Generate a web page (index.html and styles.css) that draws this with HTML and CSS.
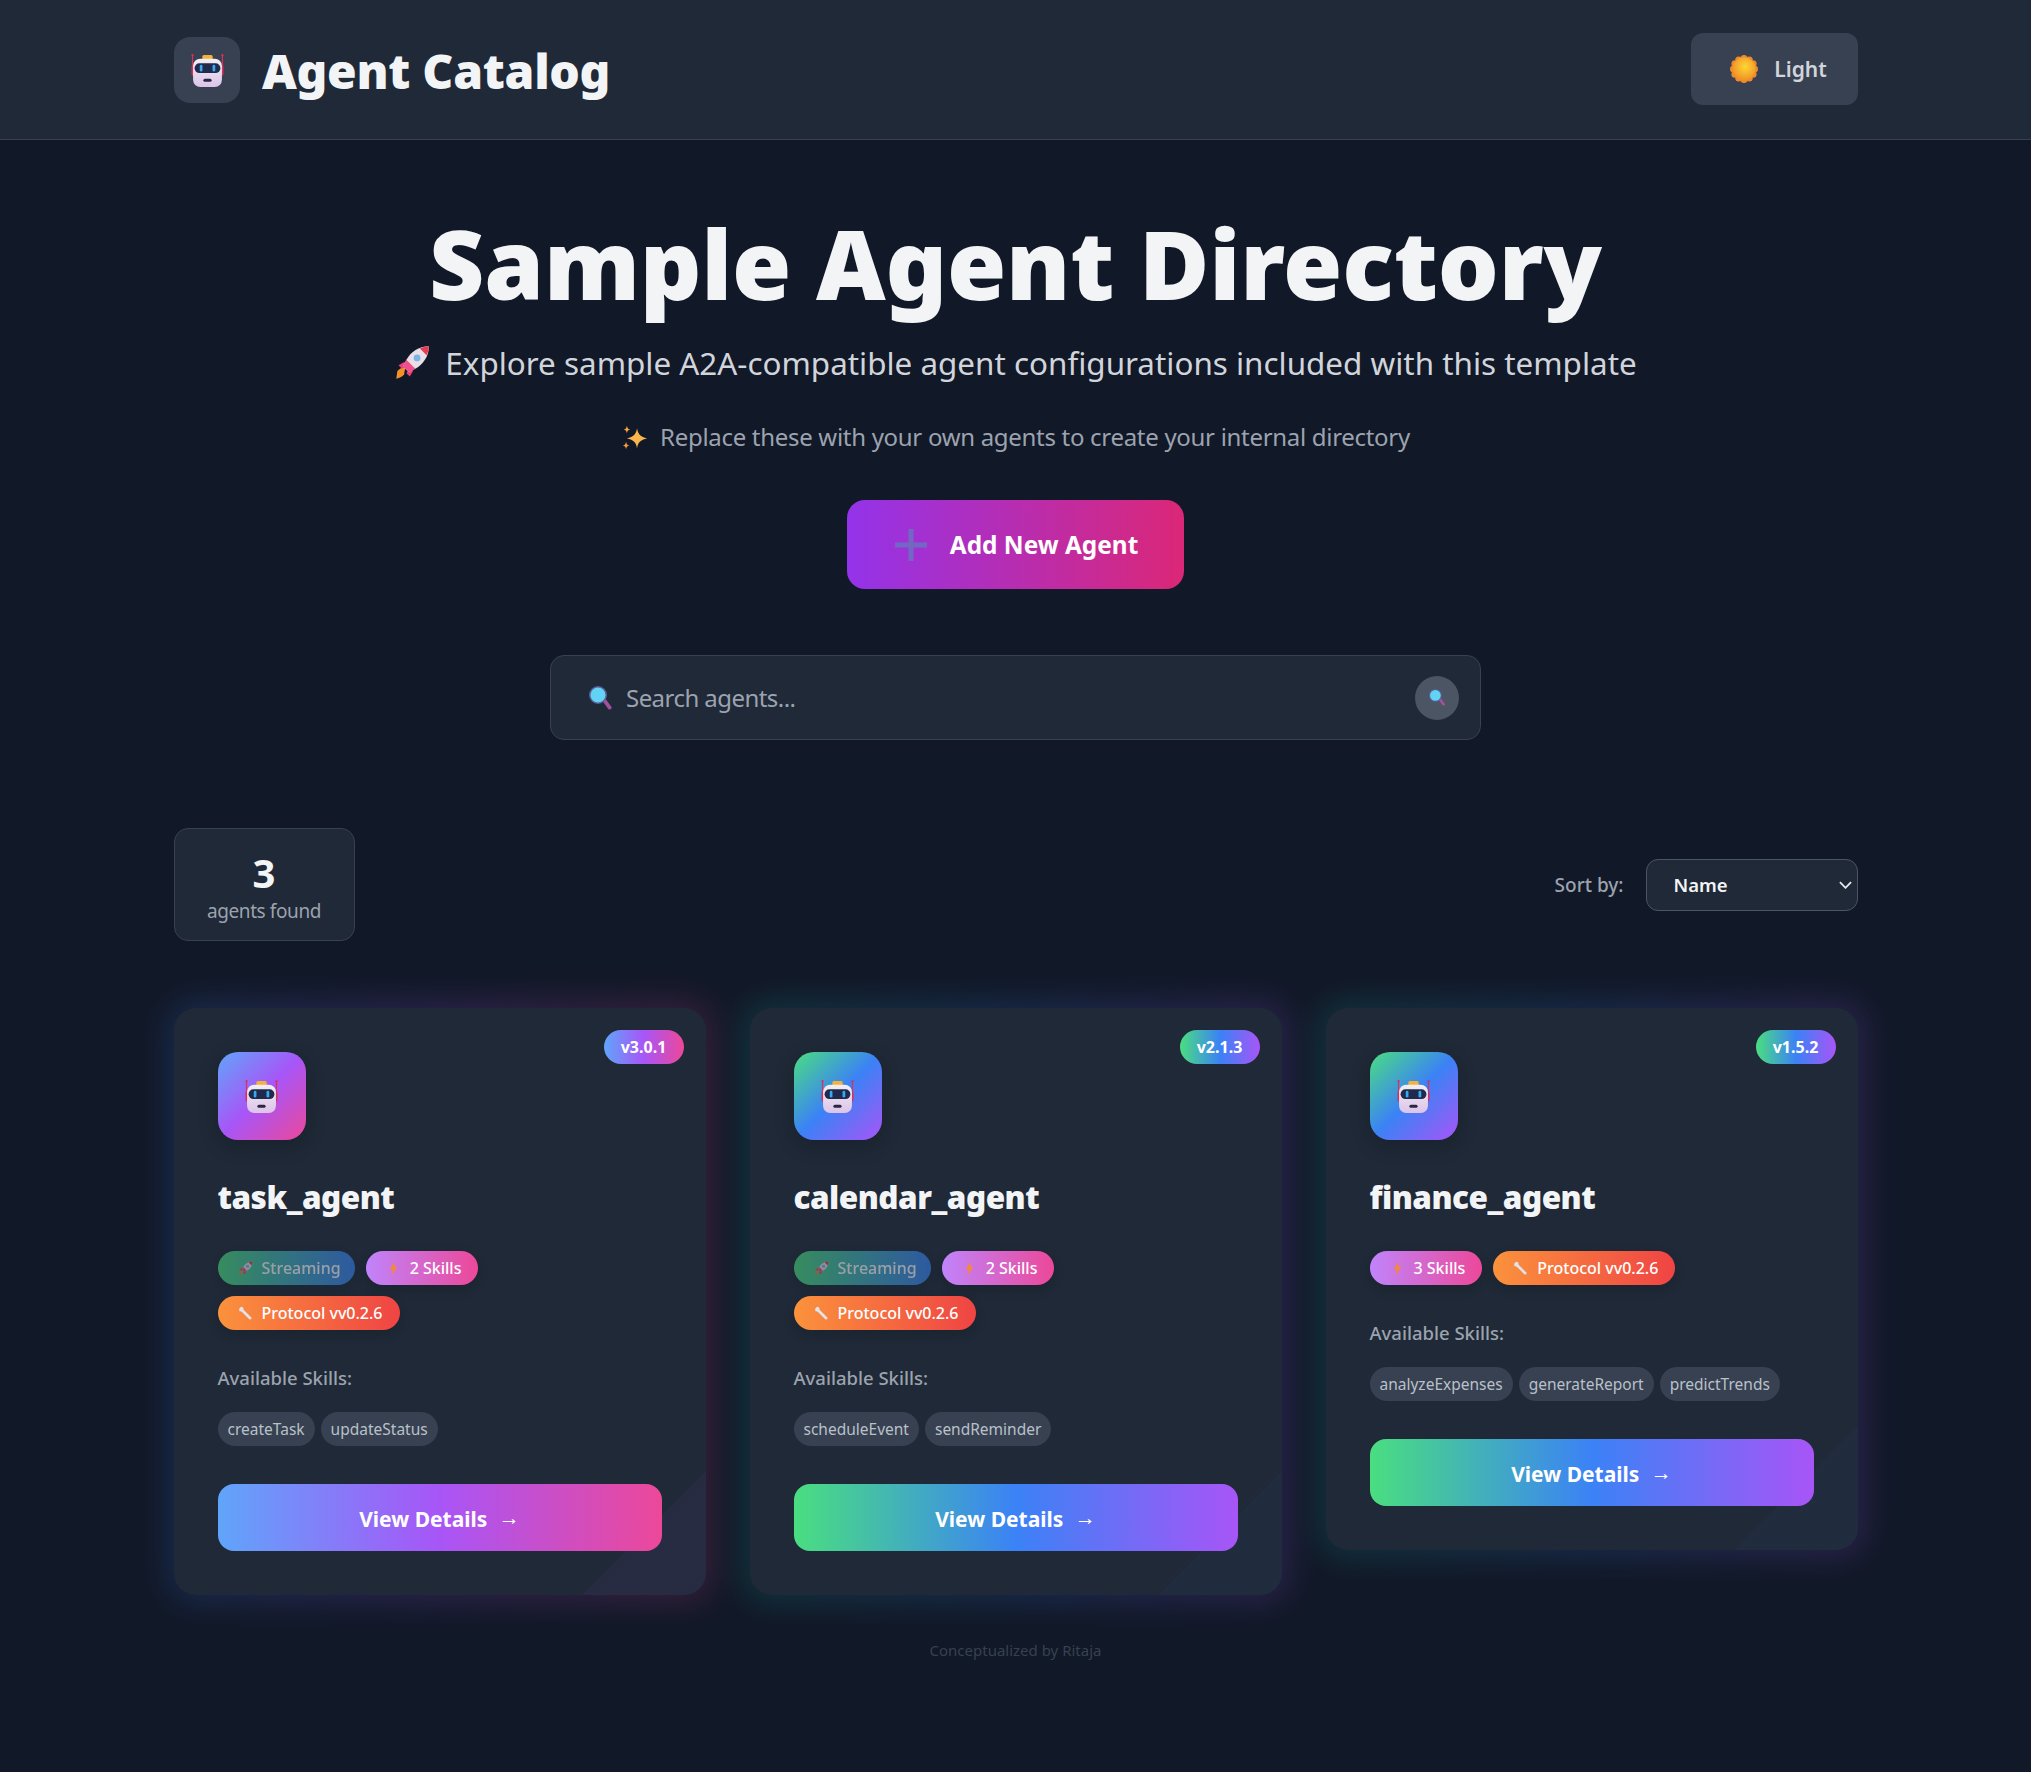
FILE: index.html
```html
<!DOCTYPE html>
<html lang="en">
<head>
  <meta charset="UTF-8" />
  <title>Agent Catalog</title>
  <link rel="stylesheet" href="styles.css">
</head>
<body>
  <!-- shared icons -->
  <svg class="icon-defs" aria-hidden="true">
    <defs>
      <linearGradient id="headFill" x1="0" y1="0" x2="0" y2="1">
        <stop offset="0" stop-color="#f3eef0" />
        <stop offset="1" stop-color="#dcc4ea" />
      </linearGradient>
      <radialGradient id="sunFill" cx="0.55" cy="0.4" r="0.65">
        <stop offset="0" stop-color="#fdd835" />
        <stop offset="1" stop-color="#f08a24" />
      </radialGradient>
      <symbol id="robot" viewBox="0 0 32 32">
        <path d="M1.500 1v14M30.500 1v14" stroke="#d8305f" stroke-width="1.200" fill="none" />
        <circle cx="1.500" cy="1.200" r="1.100" fill="#d8305f" />
        <circle cx="30.500" cy="1.200" r="1.100" fill="#d8305f" />
        <rect x="0.500" y="11" width="3" height="10" rx="1.500" fill="#d8305f" />
        <rect x="28.500" y="11" width="3" height="10" rx="1.500" fill="#d8305f" />
        <rect x="11" y="1" width="10" height="4.500" rx="1.500" fill="#f4b23c" />
        <rect x="2" y="4.500" width="28" height="27.500" rx="7" fill="url(#headFill)" />
        <rect x="3.500" y="9" width="25" height="9.500" rx="4.700" fill="#1f2a4d" />
        <rect x="8.500" y="10.500" width="2.600" height="6.500" rx="1.300" fill="#38a8f0" />
        <rect x="20.900" y="10.500" width="2.600" height="6.500" rx="1.300" fill="#38a8f0" />
        <rect x="12" y="24" width="8" height="3" rx="1.500" fill="#2b2740" />
      </symbol>
      <symbol id="rocket" viewBox="0 0 32 32">
        <path d="M10 20c-3 0-5 1-7 3l-1 7c3-1 6-2 7-4z" fill="#f4902c" />
        <path d="M9 15l-5 3 3 3 5-3zM17 23l-3 5-3-3 3-5z" fill="#ec3f7c" />
        <path d="M31 1c-9 0-16 5-20 12l-3 6 5 5 6-3c7-4 12-11 12-20z" fill="#e9dfe6" />
        <path d="M31 1c-3 0-6 1-8 2l6 6c1-2 2-5 2-8z" fill="#e53b54" />
        <path d="M11 13l8 8-6 3-5-5z" fill="#ef4f8c" />
        <circle cx="20.500" cy="11.500" r="3" fill="#7fb2e5" />
      </symbol>
      <symbol id="sparkles" viewBox="0 0 32 32">
        <path d="M19 5c1 7 4 10 12 12-8 2-11 5-12 12-1-7-4-10-12-12 8-2 11-5 12-12z" fill="#f8b64c" />
        <path d="M7 2c.5 3 1.500 4 4 4.500-2.500.5-3.500 1.500-4 4.500-.5-3-1.500-4-4-4.500 2.500-.5 3.500-1.500 4-4.500z" fill="#f8a53c" />
        <path d="M6 21c.5 3 1.500 4 4 4.500-2.500.5-3.500 1.500-4 4.500-.5-3-1.500-4-4-4.500 2.500-.5 3.500-1.500 4-4.500z" fill="#f59a3a" />
      </symbol>
      <symbol id="magnifier" viewBox="0 0 32 32">
        <path d="M18 20l4-3 8 11c1 2-2 4-4 3z" fill="#a0529c" />
        <circle cx="12" cy="12" r="12" fill="#5a5f9a" />
        <circle cx="12" cy="12" r="10" fill="#62d2f5" />
      </symbol>
      <symbol id="bolt" viewBox="0 0 16 24">
        <path d="M10 0L2 14h5l-2 10 9-15H9z" fill="#f58a35" />
      </symbol>
      <symbol id="wrench" viewBox="0 0 24 24">
        <path d="M2 4l3-3 3 1 1 4 12 12c2 2-1 5-3 3L6 9 2 8z" fill="#dfe3ea" />
      </symbol>
      <symbol id="sun" viewBox="0 0 28 28">
        <g fill="#ee8a2c">
          <circle cx="14" cy="3.500" r="3.500" /><circle cx="19.300" cy="4.900" r="3.500" />
          <circle cx="23.100" cy="8.700" r="3.500" /><circle cx="24.500" cy="14" r="3.500" />
          <circle cx="23.100" cy="19.300" r="3.500" /><circle cx="19.300" cy="23.100" r="3.500" />
          <circle cx="14" cy="24.500" r="3.500" /><circle cx="8.700" cy="23.100" r="3.500" />
          <circle cx="4.900" cy="19.300" r="3.500" /><circle cx="3.500" cy="14" r="3.500" />
          <circle cx="4.900" cy="8.700" r="3.500" /><circle cx="8.700" cy="4.900" r="3.500" />
        </g>
        <circle cx="14" cy="14" r="11.500" fill="url(#sunFill)" />
      </symbol>
    </defs>
  </svg>

  <header class="topbar">
    <div class="brand">
      <span class="brand-icon"><svg class="robot"><use href="#robot" /></svg></span>
      <span class="brand-name">Agent Catalog</span>
    </div>
    <button class="theme-toggle">
      <svg class="sun"><use href="#sun" /></svg>
      Light
    </button>
  </header>

  <main class="page">
    <section class="hero">
      <h1>Sample Agent Directory</h1>
      <p class="hero-sub"><svg class="hero-emoji"><use href="#rocket" /></svg>Explore sample A2A-compatible agent configurations included with this template</p>
      <p class="hero-note"><svg class="note-emoji"><use href="#sparkles" /></svg>Replace these with your own agents to create your internal directory</p>
      <button class="add-btn">
        <svg class="plus" viewBox="0 0 32 32"><path d="M16 0v32M0 16h32" stroke="#7268c4" stroke-width="5" /></svg>
        Add New Agent
      </button>
    </section>

    <div class="search">
      <svg class="search-icon"><use href="#magnifier" /></svg>
      <span class="search-text">Search agents...</span>
      <button class="search-btn"><svg class="search-btn-icon"><use href="#magnifier" /></svg></button>
    </div>

    <div class="toolbar">
      <div class="stats">
        <div class="stats-num">3</div>
        <div class="stats-label">agents found</div>
      </div>
      <div class="sort">
        <label for="sortBy">Sort by:</label>
        <select id="sortBy">
          <option>Name</option>
        </select>
      </div>
    </div>

    <div class="cards">
      <article class="card card-pink">
        <span class="version">v3.0.1</span>
        <div class="card-icon"><svg class="robot"><use href="#robot" /></svg></div>
        <h2>task_agent</h2>
        <div class="badges">
          <span class="badge badge-stream"><svg class="badge-icon"><use href="#rocket" /></svg>Streaming</span>
          <span class="badge badge-skills"><svg class="badge-icon"><use href="#bolt" /></svg>2 Skills</span>
          <span class="badge badge-proto"><svg class="badge-icon"><use href="#wrench" /></svg>Protocol vv0.2.6</span>
        </div>
        <div class="skills-title">Available Skills:</div>
        <div class="skills">
          <span class="skill">createTask</span>
          <span class="skill">updateStatus</span>
        </div>
        <button class="details">View Details <span class="arrow">→</span></button>
      </article>

      <article class="card card-green">
        <span class="version">v2.1.3</span>
        <div class="card-icon"><svg class="robot"><use href="#robot" /></svg></div>
        <h2>calendar_agent</h2>
        <div class="badges">
          <span class="badge badge-stream"><svg class="badge-icon"><use href="#rocket" /></svg>Streaming</span>
          <span class="badge badge-skills"><svg class="badge-icon"><use href="#bolt" /></svg>2 Skills</span>
          <span class="badge badge-proto"><svg class="badge-icon"><use href="#wrench" /></svg>Protocol vv0.2.6</span>
        </div>
        <div class="skills-title">Available Skills:</div>
        <div class="skills">
          <span class="skill">scheduleEvent</span>
          <span class="skill">sendReminder</span>
        </div>
        <button class="details">View Details <span class="arrow">→</span></button>
      </article>

      <article class="card card-green">
        <span class="version">v1.5.2</span>
        <div class="card-icon"><svg class="robot"><use href="#robot" /></svg></div>
        <h2>finance_agent</h2>
        <div class="badges">
          <span class="badge badge-skills"><svg class="badge-icon"><use href="#bolt" /></svg>3 Skills</span>
          <span class="badge badge-proto"><svg class="badge-icon"><use href="#wrench" /></svg>Protocol vv0.2.6</span>
        </div>
        <div class="skills-title">Available Skills:</div>
        <div class="skills">
          <span class="skill">analyzeExpenses</span>
          <span class="skill">generateReport</span>
          <span class="skill">predictTrends</span>
        </div>
        <button class="details">View Details <span class="arrow">→</span></button>
      </article>
    </div>

    <footer class="credit">Conceptualized by Ritaja</footer>
  </main>
</body>
</html>
```

FILE: styles.css
```css
* {
  box-sizing: border-box;
}

body {
  margin: 0;
  background-color: #111827;
  color: #f3f4f6;
  font-family: "Noto Sans", "Open Sans", sans-serif;
}

button {
  font-family: inherit;
  border: none;
}

.icon-defs {
  display: block;
  width: 0;
  height: 0;
}

.topbar {
  height: 140px;
  padding: 0 173px 0 174px;
  display: flex;
  align-items: center;
  justify-content: space-between;
  background-color: #1f2937;
  border-bottom: 1px solid #374151;
}

.brand {
  display: flex;
  align-items: center;
  gap: 22px;
  padding-top: 1px;
}

.brand-icon {
  width: 66px;
  height: 66px;
  border-radius: 16px;
  background-color: #374151;
  display: flex;
  align-items: center;
  justify-content: center;
}

.robot {
  width: 33px;
  height: 33px;
}

.brand-name {
  font-size: 48px;
  font-weight: 900;
  letter-spacing: -0.3px;
}

.theme-toggle {
  width: 167px;
  height: 72px;
  margin-bottom: 2px;
  padding-left: 14px;
  border-radius: 12px;
  background-color: #374151;
  color: #d1d5db;
  font-size: 21px;
  font-weight: 600;
  display: flex;
  align-items: center;
  justify-content: center;
  gap: 16px;
}

.sun {
  width: 28px;
  height: 28px;
}

.page {
  width: 1684px;
  margin: 0 auto;
}

.hero {
  display: flex;
  flex-direction: column;
  align-items: center;
}

h1 {
  margin: 60px 0 0;
  font-size: 96px;
  line-height: 125px;
  font-weight: 900;
  letter-spacing: -0.2px;
}

.hero-sub {
  margin: 16px 0 0;
  font-size: 31.4px;
  line-height: 44px;
  color: #d1d5db;
  display: flex;
  align-items: center;
}

.hero-emoji {
  width: 36px;
  height: 36px;
  margin-right: 15px;
}

.hero-note {
  margin: 30px 0 0;
  font-size: 24px;
  letter-spacing: -0.3px;
  line-height: 44px;
  color: #9ca3af;
  display: flex;
  align-items: center;
}

.note-emoji {
  width: 27px;
  height: 27px;
  margin-right: 12px;
}

.add-btn {
  width: 337px;
  height: 89px;
  margin-top: 41px;
  padding-left: 8px;
  border-radius: 18px;
  background: linear-gradient(90deg, #9333ea, #db2777);
  color: #fff;
  font-size: 24.4px;
  font-weight: 700;
  display: flex;
  align-items: center;
  justify-content: center;
  gap: 23px;
}

.plus {
  width: 32px;
  height: 32px;
}

.search {
  width: 931px;
  height: 85px;
  margin: 66px auto 0;
  padding: 0 21px 0 38px;
  display: flex;
  align-items: center;
  gap: 13px;
  background-color: #1f2937;
  border: 1px solid #374151;
  border-radius: 14px;
}

.search-icon {
  width: 24px;
  height: 24px;
}

.search-text {
  flex: 1;
  font-size: 24px;
  letter-spacing: -0.55px;
  color: #9ca3af;
}

.search-btn {
  width: 44px;
  height: 44px;
  padding: 0;
  border-radius: 50%;
  background-color: #4b5563;
  display: flex;
  align-items: center;
  justify-content: center;
}

.search-btn-icon {
  width: 17px;
  height: 17px;
}

.toolbar {
  margin-top: 88px;
  display: flex;
  align-items: center;
  justify-content: space-between;
}

.stats {
  width: 181px;
  height: 113px;
  padding-top: 20px;
  text-align: center;
  background-color: #1f2937;
  border: 1px solid #374151;
  border-radius: 14px;
}

.stats-num {
  font-size: 40px;
  line-height: 47px;
  font-weight: 700;
}

.stats-label {
  font-size: 19px;
  letter-spacing: -0.4px;
  line-height: 30px;
  color: #9ca3af;
}

.sort {
  display: flex;
  align-items: center;
  gap: 22px;
}

.sort label {
  font-size: 19px;
  font-weight: 500;
  color: #9ca3af;
}

.sort select {
  width: 212px;
  height: 52px;
  padding: 0 27px;
  appearance: none;
  font-family: inherit;
  font-size: 18.5px;
  font-weight: 600;
  color: #f3f4f6;
  background-color: #1f2937;
  background-image: url("data:image/svg+xml,%3Csvg xmlns='http://www.w3.org/2000/svg' viewBox='0 0 14 8'%3E%3Cpath d='M1 1l6 6 6-6' fill='none' stroke='%23e5e7eb' stroke-width='2'/%3E%3C/svg%3E");
  background-repeat: no-repeat;
  background-position: right 5px center;
  background-size: 13px 8px;
  border: 1px solid #4b5563;
  border-radius: 12px;
}

.cards {
  margin-top: 67px;
  display: grid;
  grid-template-columns: repeat(3, 1fr);
  gap: 44px;
  align-items: start;
}

.card {
  position: relative;
  padding: 44px;
  background-color: #1f2937;
  border-radius: 22px;
}

/* soft coloured glow round the card */
.card::before {
  content: "";
  position: absolute;
  inset: -8px;
  z-index: -1;
  border-radius: 28px;
  filter: blur(16px);
  opacity: 0.17;
}

.card-pink::before {
  background: linear-gradient(90deg, #3b82f6, #a855f7, #ec4899);
}

.card-green::before {
  background: linear-gradient(90deg, #14b8a6, #3b82f6, #a855f7);
}

/* faint corner triangle */
.card::after {
  content: "";
  position: absolute;
  right: 0;
  bottom: 0;
  width: 122px;
  height: 125px;
  border-bottom-right-radius: 22px;
  background: linear-gradient(135deg, transparent 50%, rgba(168, 85, 247, 0.06) 50%);
}

.card-green::after {
  background: linear-gradient(135deg, transparent 50%, rgba(59, 130, 246, 0.04) 50%);
}

.version {
  position: absolute;
  top: 22px;
  right: 22px;
  width: 80px;
  height: 34px;
  border-radius: 17px;
  font-size: 16px;
  line-height: 34px;
  font-weight: 700;
  text-align: center;
  color: #fff;
}

.card-pink .version {
  background: linear-gradient(90deg, #60a5fa, #a855f7, #ec4899);
}

.card-green .version {
  background: linear-gradient(90deg, #4ade80, #3b82f6, #a855f7);
}

.card-icon {
  width: 88px;
  height: 88px;
  border-radius: 20px;
  display: flex;
  align-items: center;
  justify-content: center;
  box-shadow: 0 6px 20px rgba(0, 0, 0, 0.2);
}

.card-pink .card-icon {
  background: linear-gradient(135deg, #60a5fa, #a855f7, #ec4899);
}

.card-green .card-icon {
  background: linear-gradient(135deg, #4ade80, #3b82f6, #a855f7);
}

h2 {
  margin: 35px 0 0;
  font-size: 31.5px;
  line-height: 44px;
  font-weight: 900;
  letter-spacing: -0.5px;
}

.badges {
  margin-top: 32px;
  display: flex;
  flex-wrap: wrap;
  gap: 11px;
}

.badge {
  height: 34px;
  padding: 0 17px 0 20px;
  border-radius: 17px;
  display: flex;
  align-items: center;
  gap: 9px;
  font-size: 16px;
  font-weight: 500;
  color: #fff;
  box-shadow: 0 4px 12px rgba(0, 0, 0, 0.15);
}

.badge-icon {
  width: 15px;
  height: 15px;
}

.badge-stream {
  padding-right: 14px;
  background: linear-gradient(90deg, #4ade80, #3b82f6);
  opacity: 0.55;
}

.badge-skills {
  background: linear-gradient(90deg, #c084fc, #ec4899);
}

.badge-proto {
  background: linear-gradient(90deg, #fb923c, #ef4444);
}

.skills-title {
  margin-top: 33px;
  font-size: 18.5px;
  line-height: 30px;
  font-weight: 500;
  color: #9ca3af;
}

.skills {
  margin-top: 19px;
  display: flex;
  flex-wrap: wrap;
  gap: 6px;
}

.skill {
  height: 34px;
  padding: 0 10px;
  border-radius: 17px;
  background-color: #374151;
  font-size: 15.5px;
  line-height: 34px;
  color: #b9c0ca;
}

.details {
  position: relative;
  z-index: 1;
  width: 100%;
  height: 67px;
  margin-top: 38px;
  border-radius: 16px;
  font-size: 21px;
  font-weight: 700;
  color: #fff;
  display: block;
}

.card-pink .details {
  background: linear-gradient(90deg, #60a5fa, #a855f7, #ec4899);
}

.card-green .details {
  background: linear-gradient(90deg, #4ade80, #3b82f6, #a855f7);
}

.arrow {
  margin-left: 6px;
  font-weight: 700;
  vertical-align: 2px;
}

.credit {
  margin-top: 44px;
  padding-bottom: 110px;
  text-align: center;
  font-size: 15px;
  line-height: 22px;
  color: #374151;
}
```
